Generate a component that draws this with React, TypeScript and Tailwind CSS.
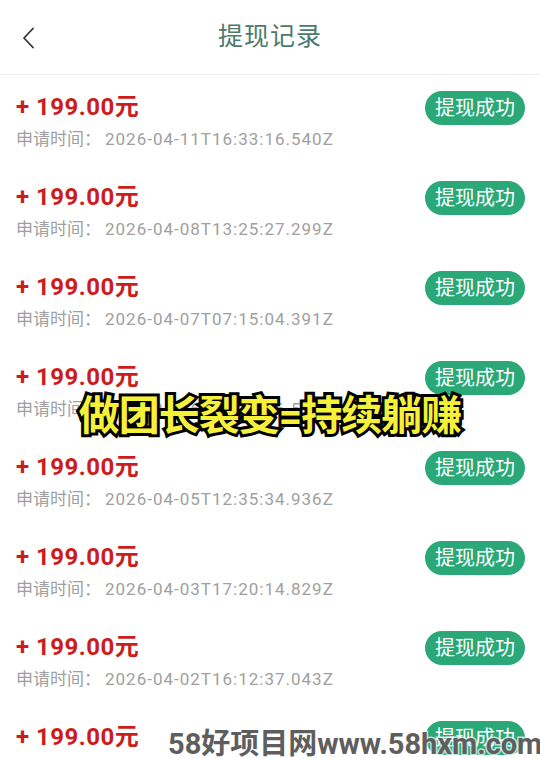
import React from 'react'

const records = [
  '2026-04-11T16:33:16.540Z',
  '2026-04-08T13:25:27.299Z',
  '2026-04-07T07:15:04.391Z',
  '2026-04-06T10:48:16.517Z',
  '2026-04-05T12:35:34.936Z',
  '2026-04-03T17:20:14.829Z',
  '2026-04-02T16:12:37.043Z',
  '2026-04-01T09:41:52.118Z',
]

const font = "font-['Roboto','Noto_Sans_CJK_SC',sans-serif]"

export default function App() {
  return (
    <div className={`relative h-[758px] w-[540px] overflow-hidden bg-white ${font}`}>
      <header className="relative flex h-[75px] items-center justify-center border-b border-[#ececec]">
        <svg
          className="absolute left-[20px] top-[27px]"
          width="18"
          height="22"
          viewBox="0 0 18 22"
          fill="none"
          stroke="#333"
          strokeWidth="1.8"
          strokeLinecap="round"
          strokeLinejoin="round"
        >
          <path d="M13 1.5 L4 11 L13 20.5" />
        </svg>
        <h1 className="text-[25px] font-normal tracking-[1px] text-[#4b7a6b]">提现记录</h1>
      </header>

      <ul className="flex flex-col">
        {records.map((time) => (
          <li key={time} className="flex h-[90px] items-start justify-between pl-[16px] pr-[15px] pt-[16px]">
            <div className="flex flex-col">
              <span className="text-[24px] font-bold leading-[32px] tracking-[0.5px] text-[#cc1c1c]">+ 199.00元</span>
              <span className="mt-[3px] text-[17px] leading-[26px] text-[#a0a0a0]">
                申请时间：<span className="ml-[4px] tracking-[1px]">{time}</span>
              </span>
            </div>
            <span className="flex h-[34px] w-[100px] items-center justify-center rounded-full bg-[#2aa877] text-[20px] text-white">
              提现成功
            </span>
          </li>
        ))}
      </ul>

      <div className="pointer-events-none absolute left-0 top-[391px] flex w-[540px] justify-center">
        <span
          className="text-[41px] font-bold leading-[50px] tracking-[-1px] text-[#f5f03a]"
          style={{ WebkitTextStroke: '6px #000', paintOrder: 'stroke fill' }}
        >
          做团长裂变=持续躺赚
        </span>
      </div>

      <div className="pointer-events-none absolute left-[168px] top-[726px] whitespace-nowrap">
        <span
          className="text-[29px] font-bold leading-[36px] text-[#5e5e5e]"
          style={{ WebkitTextStroke: '3px rgba(255,255,255,0.7)', paintOrder: 'stroke fill' }}
        >
          58好项目网www.58hxm.com
        </span>
      </div>
    </div>
  )
}
